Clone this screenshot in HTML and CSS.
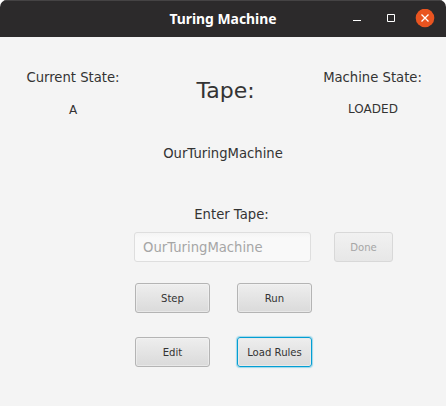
FILE: index.html
```html
<!DOCTYPE html>
<html lang="en">
<head>
<meta charset="utf-8">
<title>Turing Machine</title>
<link rel="stylesheet" href="styles.css">
</head>
<body>
<div class="window">
  <header class="titlebar">
    <h1 class="title">Turing Machine</h1>
    <svg class="controls" width="86" height="20" viewBox="0 0 86 20">
      <path d="M3 11.5h8" stroke="#fff" fill="none"/>
      <path d="M37.500 5.500h7v7h-7z" stroke="#fff" fill="none"/>
      <circle cx="75" cy="9" r="9.300" fill="#e95420"/>
      <path d="M71.500 5.500l7 7m0-7l-7 7" stroke="#fff" stroke-width="1.300" fill="none"/>
    </svg>
  </header>
  <main class="content">
    <section class="status">
      <div class="state"><span>Current State:</span><span class="value current">A</span></div>
      <h2 class="tape-title">Tape:</h2>
      <div class="state"><span>Machine State:</span><span class="value loaded">LOADED</span></div>
    </section>
    <p class="tape">OurTuringMachine</p>
    <label class="entry-label" for="tape">Enter Tape:</label>
    <div class="entry">
      <input class="field" id="tape" value="OurTuringMachine" disabled>
      <button class="button done" disabled>Done</button>
    </div>
    <div class="actions">
      <button class="button">Step</button>
      <button class="button">Run</button>
      <button class="button">Edit</button>
      <button class="button focused">Load Rules</button>
    </div>
  </main>
</div>
</body>
</html>
```
FILE: styles.css
```css
* { box-sizing: border-box; }
body { margin: 0; background: #fff; }
.window {
  width: 446px;
  height: 406px;
  overflow: hidden;
  border-radius: 7px 7px 0 0;
  background: #f4f4f4;
  color: #333;
  font: 13.2px/16px "DejaVu Sans", sans-serif;
}
.titlebar {
  display: grid;
  grid-template-columns: 1fr auto 1fr;
  align-items: center;
  height: 37px;
  background: #2c2a2b;
  border-top: 1px solid #454344;
}
.title {
  grid-column: 2;
  margin: 0;
  color: #fff;
  font: bold 13.9px/18px "Noto Sans", sans-serif;
}
.controls { justify-self: end; margin-right: 10px; }
.content { display: flex; flex-direction: column; }
.status {
  display: grid;
  grid-template-columns: 146px 153px 147px;
  height: 109px;
  padding-top: 33px;
}
.state { display: flex; flex-direction: column; align-items: center; gap: 16px; }
.value { font-size: 12px; line-height: 15px; }
.current { padding-top: 1px; }
.loaded { padding-left: 1px; }
.tape-title {
  margin: 8px 0 0;
  padding-left: 6px;
  text-align: center;
  font-size: 22px;
  font-weight: normal;
  line-height: 26px;
}
.tape { margin: 0 0 45px; text-align: center; }
.entry-label { align-self: center; margin-left: 17px; }
.entry { display: flex; gap: 23px; margin: 9px 0 0 134px; }
.field {
  width: 177px;
  height: 30px;
  padding: 0 8px;
  border: 1px solid #dedede;
  border-radius: 3px;
  background: linear-gradient(#f4f4f4, #f9f9f9 5px);
  color: #a6a6a6;
  font: 13.2px "DejaVu Sans", sans-serif;
}
.actions {
  display: grid;
  grid-template-columns: 75px 75px;
  gap: 24px 27px;
  margin: 21px 0 0 135px;
}
.button {
  height: 30px;
  padding: 0;
  border: 1px solid #b4b4b4;
  border-radius: 3px;
  background: linear-gradient(#eee, #dadada);
  box-shadow: inset 0 0 0 1px #f5f5f580;
  color: #333;
  font: 10.1px "DejaVu Sans", sans-serif;
}
.done {
  width: 59px;
  border-color: #d8d8d8;
  background: linear-gradient(#f1f1f1, #e7e7e7);
  box-shadow: none;
  color: #a6a6a6;
}
.focused {
  border-color: #039ed3;
  box-shadow: 0 0 1px 1px #9ed7ea, inset 0 0 0 1px #e9e9e9;
}
```
